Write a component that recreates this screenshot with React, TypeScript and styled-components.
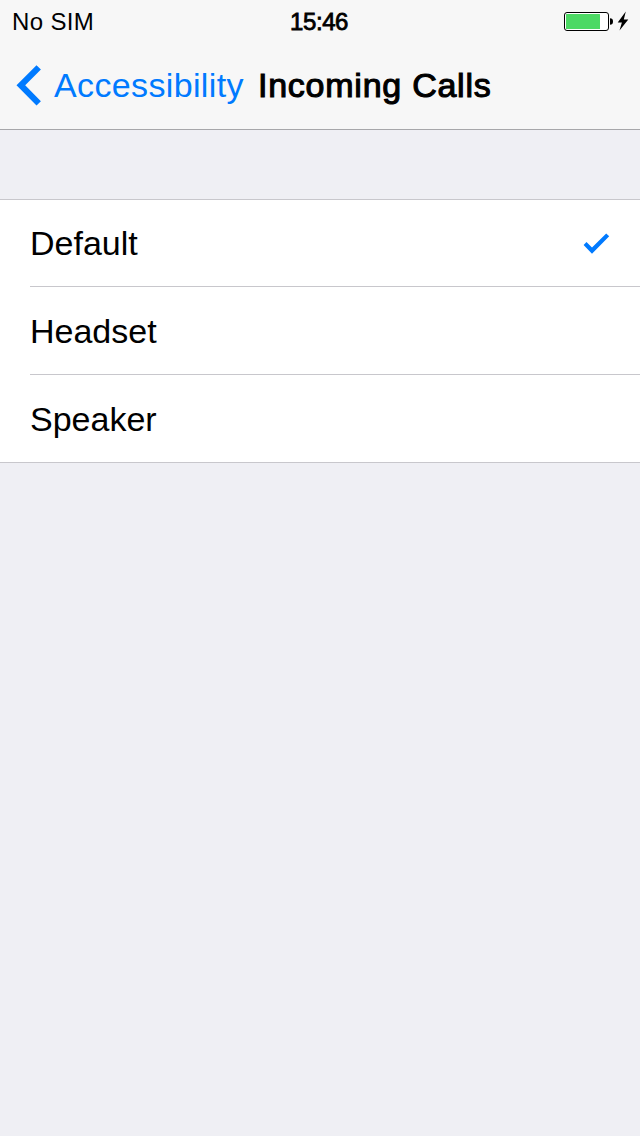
import React from "react";
import styled, { createGlobalStyle } from "styled-components";

const GlobalStyle = createGlobalStyle`
  * { box-sizing: border-box; }
  body { margin: 0; background: #efeff4; font-family: "Liberation Sans", Arial, sans-serif; color: #000; }
`;

const Screen = styled.main`
  width: 640px;
  height: 1136px;
  overflow: hidden;
  background: #efeff4;
`;

const Header = styled.header`
  height: 130px;
  background: #f7f7f7;
  border-bottom: 1px solid #a7a7aa;
`;

const StatusBar = styled.div`
  height: 44px;
  padding: 0 12px;
  display: grid;
  grid-template-columns: 1fr auto 1fr;
  align-items: center;
`;

const Label = styled.span<{
  $size: number;
  $width: number;
  $stroke?: number;
  $color?: string;
  $spacing?: number;
}>`
  display: block;
  width: ${(p) => p.$width}px;
  font-size: ${(p) => p.$size}px;
  -webkit-text-stroke: ${(p) => p.$stroke ?? 0}px currentColor;
  letter-spacing: ${(p) => p.$spacing ?? 0}px;
  color: ${(p) => p.$color ?? "#000"};
  line-height: 42px;
  white-space: nowrap;
`;

const Battery = styled.svg`
  justify-self: end;
  width: 64px;
  height: 24px;
  overflow: visible;
`;

const NavBar = styled.nav`
  display: flex;
  align-items: center;
  height: 82px;
  padding-left: 16px;
`;

const Chevron = styled.svg`
  width: 25px;
  height: 42px;
  margin-right: 13px;
`;

const List = styled.ul`
  list-style: none;
  margin: 69px 0 0;
  padding: 0 0 0 30px;
  background: #fff;
  border-top: 1px solid #c8c7cc;
  border-bottom: 1px solid #c8c7cc;
`;

const Row = styled.li`
  height: 88px;
  padding-right: 30px;
  display: flex;
  align-items: center;
  justify-content: space-between;
  & + & { border-top: 1px solid #c8c7cc; }
  &:first-child { height: 86px; }
`;

const Check = styled.svg`
  width: 27px;
  height: 22px;
`;

const options = [
  { name: "Default", width: 112, selected: true },
  { name: "Headset", width: 130, selected: false },
  { name: "Speaker", width: 130, selected: false },
];

export default function App() {
  return (
    <Screen>
      <GlobalStyle />
      <Header>
        <StatusBar>
          <Label $size={24} $width={84} $spacing={0.35}>No SIM</Label>
          <Label $size={24} $width={60} $spacing={-0.4} $stroke={0.8}>15:46</Label>
          <Battery viewBox="0 0 64 24">
            <rect x="0.5" y="2.5" width="44" height="18" rx="2.5" fill="#fff" stroke="#000" />
            <rect x="2" y="4" width="34" height="15" rx="0.5" fill="#4cd964" />
            <path d="M46 8.2 Q49 8.2 49 11.5 Q49 14.8 46 14.8 Z" fill="#000" />
            <path d="M61.8 1.6 L53.7 12.5 H57.9 L55.5 20.5 L64.3 9.4 H59.8 Z" fill="#000" />
          </Battery>
        </StatusBar>
        <NavBar>
          <Chevron viewBox="0 0 25 42">
            <path d="M20.5 1.2 L24.9 5.5 L9.2 21.3 L24.9 37.2 L20.5 41.5 L0.5 21.3 Z" fill="#007aff" />
          </Chevron>
          <Label $size={34} $width={204} $spacing={0.36} $color="#007aff">Accessibility</Label>
          <Label $size={34} $width={240} $spacing={0.75} $stroke={1.1}>Incoming Calls</Label>
        </NavBar>
      </Header>
      <List>
        {options.map((o) => (
          <Row key={o.name}>
            <Label $size={34} $width={o.width}>{o.name}</Label>
            {o.selected && (
              <Check viewBox="0 0 27 22">
                <path d="M0.6 13 L3.5 10 L9 15.4 L23.2 1.4 L26.2 4.3 L9 21.8 Z" fill="#007aff" />
              </Check>
            )}
          </Row>
        ))}
      </List>
    </Screen>
  );
}
